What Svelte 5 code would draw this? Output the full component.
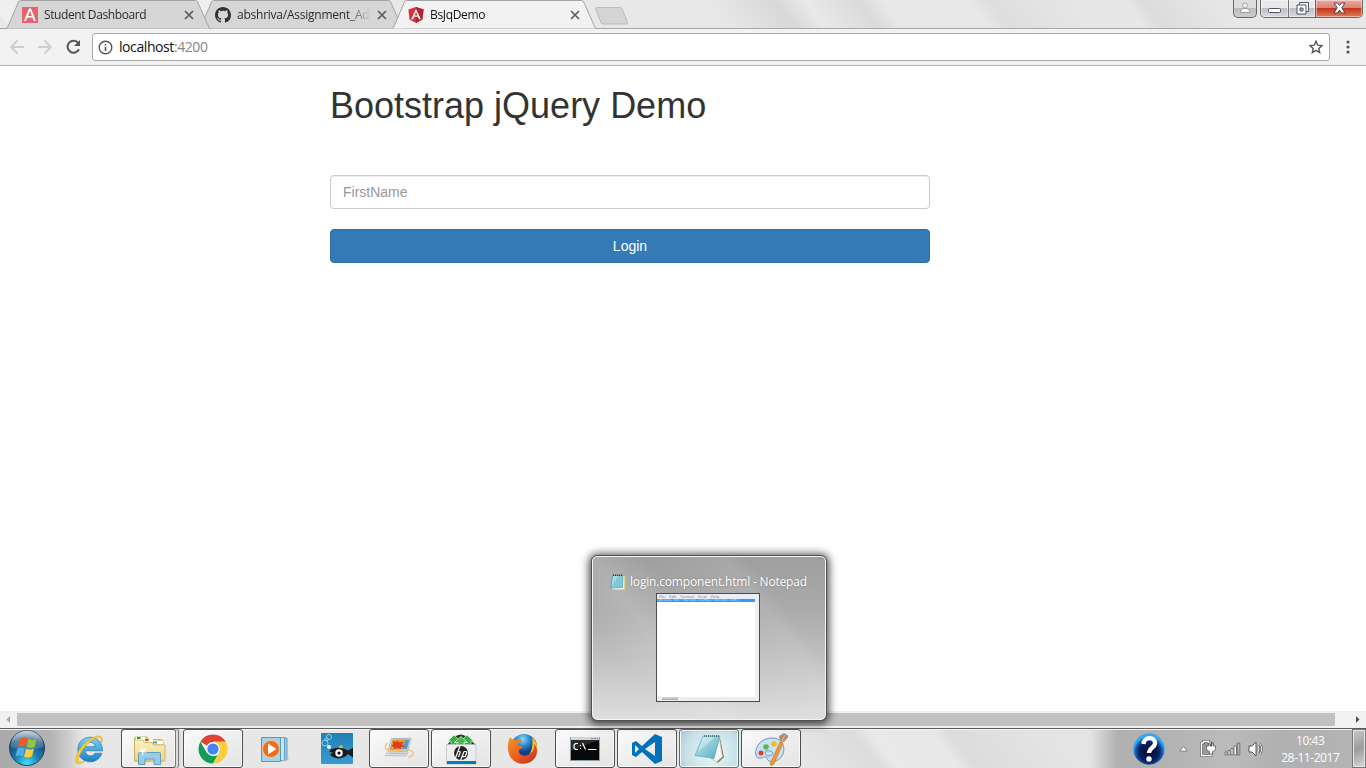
<script>
  const tabs = [
    { title: 'Student Dashboard', icon: 'angular-old', spacing: '-0.4px' },
    { title: 'abshriva/Assignment_Adv', icon: 'github', spacing: '-0.24px' },
    { title: 'BsJqDemo', icon: 'angular', spacing: '-0.35px', active: true }
  ];
  const apps = [
    { icon: 'ie' },
    { icon: 'explorer', open: true, stacked: true },
    { icon: 'chrome', open: true },
    { icon: 'media' },
    { icon: 'fish' },
    { icon: 'pictures', open: true },
    { icon: 'hp', open: true },
    { icon: 'firefox' },
    { icon: 'cmd', open: true },
    { icon: 'code', open: true },
    { icon: 'notepad', open: true, hot: true },
    { icon: 'paint', open: true }
  ];
</script>

{#snippet favicon(name)}
  {#if name === 'github'}
    <svg width="16" height="16" viewBox="0 0 16 16"><path fill="#333" d="M8 0C3.58 0 0 3.58 0 8c0 3.54 2.29 6.53 5.47 7.59.4.07.55-.17.55-.38 0-.19-.01-.82-.01-1.49-2.01.37-2.53-.49-2.69-.94-.09-.23-.48-.94-.82-1.13-.28-.15-.68-.52-.01-.53.63-.01 1.08.58 1.23.82.72 1.21 1.87.87 2.33.66.07-.52.28-.87.51-1.07-1.78-.2-3.64-.89-3.64-3.95 0-.87.31-1.59.82-2.15-.08-.2-.36-1.02.08-2.12 0 0 .67-.21 2.2.82A7.4 7.4 0 0 1 8 3.86c.68 0 1.36.09 2 .27 1.53-1.04 2.2-.82 2.2-.82.44 1.1.16 1.92.08 2.12.51.56.82 1.27.82 2.15 0 3.07-1.87 3.75-3.65 3.95.29.25.54.73.54 1.48 0 1.07-.01 1.93-.01 2.2 0 .21.15.46.55.38A8.01 8.01 0 0 0 16 8c0-4.42-3.58-8-8-8z"/></svg>
  {:else if name === 'angular'}
    <svg width="16" height="16" viewBox="0 0 16 16"><path fill="#dd2e36" d="M8 0 15.6 2.6 14.4 12.6 8 16 1.6 12.6.4 2.6z"/><path fill="#b5222b" d="M8 0 15.6 2.6 14.4 12.6 8 16z"/><path fill="#fff" d="M8 1.8 3.2 12.2h1.9l1-2.4h3.8l1 2.4h1.9zM8 5l1.4 3.4H6.6z"/></svg>
  {:else}
    <svg width="16" height="16" viewBox="0 0 16 16"><path fill="#e8636b" d="M0 0h16v16H0z"/><path fill="#fff" d="M7 1.4h2l5 12.7h-2.2l-1.4-3.6H5.4L4 14.1H1.9zM8 3.8 6.1 8.9h3.8z"/></svg>
  {/if}
{/snippet}

{#snippet appIcon(name)}
  <svg width="34" height="34" viewBox="0 0 34 34">
    {#if name === 'ie'}
      <defs><linearGradient id="ieBlue" x1="0" y1="0" x2="0" y2="1"><stop offset="0" stop-color="#74d5fa"/><stop offset="1" stop-color="#1d7fc4"/></linearGradient></defs>
      <path fill="url(#ieBlue)" stroke="#2a78ad" stroke-width=".7" d="M30.5 18.8H13.2c.3 3.1 2.4 5 5.2 5 2.1 0 3.6-.9 4.5-2.6h7c-1.6 5.2-6.1 8.6-11.7 8.6-7.1 0-12.4-5.2-12.4-12.2C5.8 10.500 11 5.200 18 5.200c7.400 0 12.500 5.400 12.500 13.600zM13.300 14.700h9.900c-.4-2.800-2.300-4.400-4.900-4.400-2.700 0-4.500 1.700-5 4.400z"/>
      <path fill="#fcc92b" stroke="#dfa21a" stroke-width=".5" d="M29.800 10.500c1-3 .6-5.600-1.400-6.300C24.200 2.700 14 8.300 8.300 16.500 3.700 23 2 29.500 4.600 31.300c1.800 1.200 5.200.2 8.700-2.300-3.200 1.400-5.700 1.700-6.600.5-1.500-2 .8-7.700 5.100-13.300C17 9.600 24.300 4.800 27.500 5.600c1.600.4 2.200 2.200 1.300 4.900z"/>
    {:else if name === 'explorer'}
      <defs><linearGradient id="folder" x2="0" y2="1"><stop stop-color="#fbf2c3"/><stop offset="1" stop-color="#ecd584"/></linearGradient></defs>
      <path fill="#efd98a" stroke="#b99d46" stroke-width=".7" d="M2.500 29V6.500q0-1.500 1.500-1.500h11l2 2.500h12q2 0 2 1.500v20z"/>
      <path fill="#fff" d="M4 5h9v3H4zM12 7h9v3h-9zM21 9h10v3H21z"/>
      <path fill="#1fa12a" d="M5 5h3.500v2H5z"/><path fill="#e6412a" d="M13 7h3.500v2H13z"/><path fill="#3699e8" d="M21 9.500h4v2h-4z"/>
      <path fill="url(#folder)" stroke="#c4a850" stroke-width=".7" d="M2.500 29V8h8l2 2.500h7l2 2.500h11.500v16z"/>
      <path fill="#94cce9" stroke="#4c91bc" stroke-width=".8" d="M6.500 32.500V21.500q0-1 1-1h20q1 0 1 1v11h-6.500v-5.500h-9v5.500z"/>
      <path fill="#fff" d="m10.500 13 .8 4.700 4.200-2.500-3 4 3 1.200-4 .2-1 4-.8-4-4-.8 3.400-1-2-3 3 1.500z" opacity=".85"/>
    {:else if name === 'chrome'}
      <path fill="#db4437" d="M17 17 4.400 9.700A14.600 14.600 0 0 1 29.700 9.700H17z"/>
      <path fill="#0f9d58" d="M17 31.600A14.600 14.600 0 0 1 4.400 9.700L10.700 20.700 17 24.300l4.500-1z"/>
      <path fill="#ffcd40" d="M17 9.700h12.700A14.600 14.600 0 0 1 17 31.600l6.300-10.900z"/>
      <circle cx="17" cy="17" r="6.900" fill="#f4f4f4"/><circle cx="17" cy="17" r="5.600" fill="#4285f4"/>
    {:else if name === 'media'}
      <path fill="#9cc6df" stroke="#649fc2" d="M9 6h20v22H9z"/><path fill="#cce3ef" stroke="#649fc2" d="M6.500 5.500h20v23h-20z"/><path fill="#a3d3ee" stroke="#529bc4" d="M3.500 5.500h19v24h-19z"/>
      <circle cx="13" cy="17" r="8.500" fill="#ee6d16" stroke="#ffbd82"/><path fill="#fff" d="m10 11.500 8.500 5.500L10 22.500z"/><path stroke="#bbb" d="m24 29 7-3"/>
    {:else if name === 'fish'}
      <defs><linearGradient id="water" x2="0" y2="1"><stop stop-color="#227fb6"/><stop offset="1" stop-color="#369dd1"/></linearGradient></defs>
      <rect x="1" y="1" width="32" height="31" rx="1" fill="url(#water)"/>
      <path fill="#ebbd43" d="m18 15 4-2 1 4z"/><path fill="#1c1c1e" d="M10 18c4-3 12-3.500 18 .5l5-3v10l-5-3.500c-5 6-14 5.500-18 .5l3-2-3.500-.5z"/>
      <circle cx="19" cy="21" r="3.700" fill="#fff"/><circle cx="19" cy="21" r="1.600"/><circle cx="9" cy="15" r="2" fill="#fff"/>
      <g fill="none" stroke="#b7e2f5" stroke-width=".7"><circle cx="5" cy="11" r="3"/><circle cx="9" cy="5" r="2.500"/><circle cx="6.500" cy="7.500" r="1.600"/></g>
    {:else if name === 'pictures'}
      <path fill="#d2dade" stroke="#9aa5aa" stroke-width=".7" d="m9.500 6.500 19.500-.3-3.500 13L6 19z"/><path fill="#4f9dcf" d="m10.700 7.700 16.800-.2-2.700 10.500-16.800-.2z"/>
      <path fill="#f09a2c" d="m10.700 7.700 13-.1-4 10.300H8z"/><path fill="#e03a1f" d="m11 9 3 1 2-1.500 1 2 5-1-2 3 3 2-4 .5 0 2-4-1-3 1 0-2-3-1 2-1.500z"/>
      <path fill="#e2e7ea" stroke="#a5afb4" stroke-width=".7" d="m6 19.500 20 .5-1.500 4-21-.5z"/><path fill="#b5c1c7" d="m7 20.500 17 .5-.5 1.500-17.500-.5z"/>
      <path fill="none" stroke="#f7c469" stroke-width="1.400" d="M5.500 11c-4 4-2 8.500 5 8 8-1 15-3 19 0 4 2.500 1 5-3 6.500"/>
    {:else if name === 'hp'}
      <path fill="#263a2a" d="m3 13 7-8q7-5 13 0l9 8z"/>
      <path fill="#37ad43" stroke="#d5f7d8" stroke-width=".7" d="m10 3 6 6h-3v4H7V9H4zM23 3l6.500 6H27v4h-7V9h-3z"/>
      <path fill="#42ba4c" stroke="#e1ffe2" stroke-width=".8" d="m17 4.500 6.500 6H20V14h-6v-3.500h-3.500z"/>
      <path fill="#ebeef0" stroke="#b9bcbf" stroke-width=".7" d="M2.500 12.500H32V32H2.500z"/><path fill="#007dba" d="M3 29h29v3H3z"/><circle cx="17" cy="21" r="7" fill="#222"/>
      <path fill="none" stroke="#fff" stroke-width="1.200" d="m16 14-4.500 12m2.300-6.500h1.700q1 0 .6 1.200L14.500 25m5.500-5.500L16.500 28.500m3.500-9h2q1 0 .6 1.200l-1 3q-.4 1-1.600 1h-1.300"/>
    {:else if name === 'firefox'}
      <defs><radialGradient id="globe" cx=".45" cy=".2"><stop stop-color="#8fdcfa"/><stop offset=".55" stop-color="#2587cd"/><stop offset="1" stop-color="#143e86"/></radialGradient><linearGradient id="fox" x2="1" y2="1"><stop stop-color="#f59b25"/><stop offset=".5" stop-color="#e96020"/><stop offset="1" stop-color="#c42c1d"/></linearGradient></defs>
      <circle cx="18" cy="15" r="13" fill="url(#globe)"/><path fill="#f8bd27" d="M26 5c7 6 7 17 0 23-4 2-8 2-12 1 10-3 14-12 12-24z"/>
      <path fill="url(#fox)" d="M4 5q1 2 4 3c4-1 6-1 8 1-3 1-4 2-4 4l5 2-4 3c-1 5 5 7 9 5 5-2 7-7 6-11 3 3 4 7 2 12C26 33 12 35 5 26 1 20 1 12 4 5z"/>
    {:else if name === 'cmd'}
      <path fill="#090909" stroke="#8e9ca5" d="M2.500 5.500h29v23h-29z"/><path fill="#cdd6db" d="M3 5h28v3H3z"/><path fill="#292929" d="M3 8h28L3 19z"/><path stroke="#6885a3" stroke-dasharray="2 1" d="M23 6.500h7"/>
      <path fill="none" stroke="#fff" stroke-width="1.200" d="M10 11.500H7.500L6 13v3l1.500 1.500H10M12.500 13v1m0 2v1m2-6 3 6.500M20 17.500h8.500"/>
    {:else if name === 'code'}
      <path fill="#0072bb" fill-rule="evenodd" d="m25 2 7 3v24l-7 3-13-12-6 5-4-2V11l4-2 6 5zM5 13v8l4-4zM15 17l10-7v14z"/>
    {:else if name === 'notepad'}
      <defs><linearGradient id="padBlue" x2="1" y2="1"><stop stop-color="#d1edf2"/><stop offset="1" stop-color="#4caabe"/></linearGradient></defs>
      <path fill="#8d7a54" d="m28 6 4 19-6 6-3-4z"/><path fill="#f6f6f2" stroke="#b6b4a9" stroke-width=".7" d="m27 4.500 3.500 20-6 5.500-5-3z"/><path fill="url(#padBlue)" stroke="#5fa7b5" stroke-width=".7" d="M11 4h17l-6 22.500-19-3z"/><path stroke="#3c6872" stroke-width="1.600" stroke-dasharray="1 1" d="M12 4h16"/><path fill="#fff" opacity=".3" d="M11 5h12L5 21z"/>
    {:else if name === 'paint'}
      <path fill="#c8e2f3" stroke="#6897bc" d="M12 7C2 10-1 23 4 26c5 1 7-3 9 0 0 5 11 5 15-2 5-8 0-22-16-17zm4 12c-6-2-6 4-2 5 6 0 6-4 2-5z"/>
      <circle cx="7" cy="21" r="2.500" fill="#dd3c31"/><circle cx="12" cy="15" r="2.800" fill="#57b952"/><circle cx="20" cy="12" r="2.800" fill="#f0bc23"/>
      <path fill="#ec9939" stroke="#c96d21" stroke-width=".6" d="m26 10 3 1-9 21q-3 3-4 0z"/><path fill="#b48a68" d="m26 9-1-5 5-3 5 3-5 6z"/><path stroke="#ddc1a4" d="m28 9 3-6"/>
    {/if}
  </svg>
{/snippet}

<div class="screen">
  <header class="strip">
    <div class="tabs">
      {#each tabs as tab, i}
        <div class="tab" class:active={tab.active} style:z-index={tab.active ? 5 : 3 - i}>
          <svg class="shape" width="206" height="29" viewBox="0 0 206 29">
            <path d="M0 28.500q1 0 1.500-1L12.500 2q.7-1.500 2-1.500h175q1.500 0 2.200 1.500l11.300 25.500q.5 1 2 1"/>
          </svg>
          <span class="fav">{@render favicon(tab.icon)}</span>
          <span class="title" style:letter-spacing={tab.spacing}>{tab.title}</span>
          <svg class="x" width="10" height="10" viewBox="0 0 10 10"><path d="m1 1 8 8m0-8L1 9"/></svg>
        </div>
      {/each}
    </div>
    <svg class="newtab" width="36" height="20" viewBox="0 0 36 20"><path d="M3.500 1.500H26q1.500 0 2.200 1.500l5.300 13.500q.5 1.500-1 1.500H9q-1.500 0-2-1.500L1.700 3q-.3-1.500 1.800-1.500z" fill="#d4d4d4" stroke="#bbb"/></svg>
    <div class="window-buttons">
      <span class="user"><svg width="12" height="12" viewBox="0 0 12 12"><circle cx="6" cy="3.500" r="2.500"/><path d="M1.500 10.500V9q0-2 3-2.500h3q3 .5 3 2.500v1.500z"/></svg></span>
      <span class="group">
        <i class="min"><svg width="13" height="6" viewBox="0 0 13 6"><rect x=".5" y=".5" width="12" height="4" rx="1" fill="#fff" stroke="#50536a"/></svg></i>
        <i class="max"><svg width="13" height="13" viewBox="0 0 13 13"><path d="M3.500.5h9v9h-9z" fill="#fff" stroke="#50536a"/><path d="M1 3h9v9H1z" fill="#fff" stroke="#50536a"/><path d="M4 6h3v3H4z" fill="#bbb" stroke="#50536a"/></svg></i>
        <i class="close"><svg width="13" height="12" viewBox="0 0 13 12"><path d="M1 1h3.500l2 2.500L8.500 1H12L8.800 5.700 12 11H8.500l-2-3-2 3H1l3.200-5.300z" fill="#fff" stroke="#52434f"/></svg></i>
      </span>
    </div>
  </header>

  <div class="toolbar">
    <svg class="nav" width="86" height="18" viewBox="0 0 86 18" fill="none">
      <path d="M18 9H5m6.500-6.500L5 9l6.500 6.500M32 9h13m-6.500-6.500L45 9l-6.500 6.500" stroke="#cecece" stroke-width="1.800"/>
      <path d="M72.300 5A6 6 0 1 0 73 11.300" stroke="#555" stroke-width="2"/><path d="M74 2v6h-6z" fill="#555"/>
    </svg>
    <div class="omnibox">
      <svg width="15" height="15" viewBox="0 0 15 15"><circle cx="7.500" cy="7.500" r="6.300" fill="none" stroke="#555" stroke-width="1.400"/><path d="M6.700 6.700h1.600V11H6.700zM6.700 4h1.600v1.600H6.700z" fill="#555"/></svg>
      <span class="url">localhost<b>:4200</b></span>
      <svg class="star" width="14" height="14" viewBox="0 0 14 14"><path d="m7 1.300 1.700 3.900 4.300.4-3.200 2.800.9 4.200L7 10.400l-3.700 2.200.9-4.200L1 5.600l4.300-.4z" fill="none" stroke="#555" stroke-width="1.400"/></svg>
    </div>
    <svg class="dots" width="4" height="14" viewBox="0 0 4 14" fill="#555"><circle cx="2" cy="2" r="1.600"/><circle cx="2" cy="7" r="1.600"/><circle cx="2" cy="12" r="1.600"/></svg>
  </div>

  <main>
    <h1>Bootstrap jQuery Demo</h1>
    <input placeholder="FirstName" />
    <button>Login</button>
  </main>

  <div class="scrollbar">
    <svg width="17" height="17" viewBox="0 0 17 17"><path d="M10 5v7L6.500 8.500z" fill="#a3a3a3"/></svg>
    <div class="thumb"></div>
    <svg class="end" width="17" height="17" viewBox="0 0 17 17"><path d="M7 5v7l3.500-3.500z" fill="#505050"/></svg>
  </div>

  <footer class="taskbar">
    <svg class="orb" width="38" height="38" viewBox="0 0 38 38">
      <defs>
        <radialGradient id="orbFill" cx=".5" cy=".95" r=".9"><stop stop-color="#45e0fb"/><stop offset=".4" stop-color="#1780b4"/><stop offset=".8" stop-color="#174a75"/><stop offset="1" stop-color="#6c8da5"/></radialGradient>
        <linearGradient id="orbShine" x2="0" y2="1"><stop stop-color="#fff" stop-opacity=".6"/><stop offset="1" stop-color="#fff" stop-opacity=".1"/></linearGradient>
      </defs>
      <circle cx="19" cy="19" r="17.500" fill="url(#orbFill)" stroke="#1c425f"/>
      <path d="M2.500 18a16.500 16.500 0 0 1 33 0Q19 23 2.500 18z" fill="url(#orbShine)"/>
      <path fill="#ee5a24" d="M12 10q4-3 7.500-.5L17.500 18q-3.500-2-7.500 0z"/><path fill="#93c83d" d="M20.500 10q4 2 8 0l-2 8q-4 2-8 0z"/><path fill="#50afe6" d="M9.500 19.500q4-2 7.500 0L15 27.500q-3.500-2-7.500 0z"/><path fill="#ffcd3c" d="M18 19.500q4 2 8 0l-2 8q-4 2-8 0z"/>
    </svg>
    <div class="apps">
      {#each apps as app}
        <div class="slot">
          <div class="app" class:open={app.open} class:hot={app.hot} class:stacked={app.stacked}>{@render appIcon(app.icon)}</div>
        </div>
      {/each}
    </div>
    <div class="tray">
      <svg class="help" width="32" height="32" viewBox="0 0 32 32"><defs><radialGradient id="helpBlue" cy=".6"><stop stop-color="#03062f"/><stop offset=".65" stop-color="#092260"/><stop offset=".88" stop-color="#1766c0"/><stop offset="1" stop-color="#36a7ee"/></radialGradient></defs><circle cx="16" cy="16" r="15.700" fill="url(#helpBlue)"/><path d="M10.500 11c.5-8 12-7.500 11.500-.5-.3 4-6 4.500-6 9.500" fill="none" stroke="#fff" stroke-width="4.300"/><circle cx="16" cy="26" r="2.700" fill="#fff"/></svg>
      <svg class="up" width="9" height="6" viewBox="0 0 9 6"><path d="M4.500.7 8.300 5H.7z" fill="#fff" stroke="#666" stroke-width=".7"/></svg>
      <svg class="power" width="16" height="17" viewBox="0 0 16 17"><path d="M3.500 1.500h5V3H11v12.500H1.500V3h2z" fill="#999" stroke="#555" stroke-width="2.600"/><path d="M3.500 2.500V1.500h5v1.500h2.500M3.500 3h-2v12.500h9.500v-3" fill="none" stroke="#fff" stroke-width="1.400"/><path d="M8.500 3v3H6.500v2.500q0 2.500 3 3V14h3v-2.500q3-.5 3-3V6h-2V3h-1.500v3H10V3z" fill="#fff" stroke="#555" stroke-width=".8"/></svg>
      <svg class="signal" width="17" height="14" viewBox="0 0 17 14"><g fill="#fff" stroke="#5e5e5e" stroke-width=".8"><path d="M1 10h2v3H1zM4 8.500h2V13H4zM7 6.500h2V13H7zM10 4h2.500v9H10z"/><path fill="#bbb" d="M13.300 1h2.500v12h-2.500z"/></g></svg>
      <svg class="sound" width="16" height="16" viewBox="0 0 16 16"><path d="M1 5h3l4-4v14l-4-4H1z" fill="#fff" stroke="#555"/><path d="M10 5q2 3 0 6m2-8q3.500 5 0 10" fill="none" stroke="#555" stroke-width="2.200"/><path d="M10 5q2 3 0 6m2-8q3.500 5 0 10" fill="none" stroke="#fff" stroke-width="1"/></svg>
      <div class="clock"><span>10:43</span><span>28-11-2017</span></div>
      <div class="peek"></div>
    </div>
  </footer>

  <div class="preview">
    <div class="caption">
      <svg width="16" height="16" viewBox="0 0 16 16"><path fill="#ead28a" d="M4 2h11v14H3z"/><path fill="#f7f7ef" d="M3 2h11v13H2z"/><path fill="#83c8d8" stroke="#4b9db1" stroke-width=".7" d="M2.500 1.500H13l-.5 12-12 .5z"/><path stroke="#26424b" stroke-width="1.500" stroke-dasharray="1 1" d="M3 1.200h10"/><path fill="#fff" opacity=".35" d="M3 2h5L2 12z"/></svg>
      <span>login.component.html - Notepad</span>
    </div>
    <div class="mini">
      <div class="menu"><span>File</span><span>Edit</span><span>Format</span><span>View</span><span>Help</span></div>
      <div class="page">
        <div class="selection">&lt;div class="row"&gt; &lt;div class="col-md-6"&gt;&lt;div class="form"&gt;</div>
      </div>
      <div class="mini-scroll"><i></i></div>
    </div>
  </div>
</div>

<style>
  :global(body) { margin: 0; overflow: hidden; }
  .screen { position: relative; width: 1366px; height: 768px; display: flex; flex-direction: column; overflow: hidden; background: #fff; font-family: 'Open Sans', 'Noto Sans', sans-serif; }
  svg { display: block; flex: none; }

  .strip { position: relative; z-index: 0; height: 28px; flex: none; display: flex; padding-left: 6px; background: #e8e8e8; border-bottom: 1px solid #a8a8a8; clip-path: inset(0 0 -1px 0); }
  .strip::before { content: ''; position: absolute; z-index: -1; inset: 0 -10px 0 0; transform: skewX(36deg); background: linear-gradient(90deg, #f0f0f0 0, #e4e4e4 170px, #f0f0f0 200px, #e8e8e8 350px, #e8e8e8 715px, #d8d8d8 785px, #e9e9e9 815px, #dadada 868px, #e8e8e8 892px, #e8e8e8 978px, #dedede 1000px, #e6e6e6 1080px, #e7e7e7 1135px, #dcdcdc 1152px, #e7e7e7 1230px); }
  .tabs { display: flex; }
  .tab { position: relative; isolation: isolate; display: flex; align-items: center; width: 206px; height: 29px; margin-right: -13px; box-sizing: border-box; padding: 0 17px 0 16px; font-size: 12px; color: #2b2b2b; }
  .shape { position: absolute; left: 0; top: 0; z-index: -1; fill: #d6d6d6; stroke: #a3a3a3; }
  .active .shape { fill: #f2f2f2; }
  .active { color: #111; }
  .title { width: 140px; margin-left: 6px; white-space: nowrap; line-height: 20px; -webkit-mask-image: linear-gradient(90deg, #000 110px, transparent 134px); mask-image: linear-gradient(90deg, #000 110px, transparent 134px); }
  .x { fill: none; stroke: #5c5c5c; stroke-width: 1.700; }
  .newtab { margin: 6px 0 0 9px; }
  .window-buttons { margin-left: auto; display: flex; gap: 3px; padding-right: 3px; height: 18px; }
  .user, .group { box-sizing: border-box; height: 18px; display: flex; border: 1px solid #686868; border-top: 0; border-radius: 0 0 5px 5px; overflow: hidden; }
  .user { width: 24px; justify-content: center; padding-top: 2px; background: linear-gradient(#ddd 45%, #bdbdbd 50%, #ccc); }
  .user svg { fill: #f7f7f7; stroke: #8d8d8d; stroke-width: .8; }
  .group { width: 103px; background: linear-gradient(#e9e9ea 45%, #bec0c4 50%, #d8dadd); }
  .group i { display: flex; justify-content: center; box-shadow: inset 0 0 0 1px #ffffff70; }
  .min { width: 28px; border-right: 1px solid #777; padding-top: 8px; box-sizing: border-box; }
  .max { width: 27px; padding-top: 2px; box-sizing: border-box; border-right: 1px solid #7c5656; }
  .close { flex: 1; padding-top: 2px; background: linear-gradient(#e9aa9e 0, #d98375 45%, #c3351c 50%, #dc7d56); }

  .toolbar { height: 37px; box-sizing: border-box; flex: none; display: flex; align-items: center; background: #f2f2f2; border-bottom: 1px solid #b4b4b4; }
  .nav { margin-left: 6px; }
  .omnibox { width: 1238px; height: 28px; box-sizing: border-box; display: flex; align-items: center; border: 1px solid #a9a9a9; border-radius: 3px; background: #fff; padding: 0 6px 0 5px; }
  .url { margin-left: 6px; font-size: 14px; letter-spacing: -.42px; color: #111; line-height: 20px; }
  .url b { font-weight: 400; color: #858585; }
  .star { margin-left: auto; }
  .dots { margin-left: 16px; }

  main { flex: 1; width: 600px; margin-left: 330px; font-family: 'Liberation Sans', Arial, sans-serif; color: #333; display: flex; flex-direction: column; }
  h1 { margin: 20px 0 0; font-size: 36px; line-height: 40px; font-weight: 400; white-space: nowrap; }
  input { margin: 49px 0 0; height: 34px; box-sizing: border-box; border: 1px solid #ccc; border-radius: 4px; padding: 6px 12px; font: 14px 'Liberation Sans', Arial, sans-serif; box-shadow: inset 0 1px 1px rgba(0,0,0,.075); outline: none; }
  input::placeholder { color: #999; opacity: 1; }
  button { margin-top: 20px; height: 34px; padding: 0; border: 1px solid #2e6da4; border-radius: 4px; background: #337ab7; color: #fff; font: 14px/20px 'Liberation Sans', Arial, sans-serif; }

  .scrollbar { height: 17px; flex: none; display: flex; align-items: center; background: #f1f1f1; }
  .thumb { width: 1318px; height: 13px; background: #c1c1c1; }
  .end { margin-left: auto; }

  .taskbar { position: relative; z-index: 0; height: 40px; box-sizing: border-box; flex: none; display: flex; border-top: 1px solid #5a5a5a; background: #e8e8e8; overflow: hidden; box-shadow: inset 0 1px #f6f6f6; }
  .taskbar::before { content: ''; position: absolute; z-index: -2; inset: 1px -20px 0 -20px; transform: skewX(37deg); background: linear-gradient(90deg, #e7e7e7 0, #e7e7e7 810px, #dcdcdc 885px, #e9e9e9 903px, #e8e8e8 965px, #dcdcdc 982px, #e4e4e4 1080px, #e4e4e4); }
  .taskbar::after { content: ''; position: absolute; z-index: -1; inset: 1px 0 0; background: linear-gradient(90deg, #a9a9a9 0, #b3b3b3 50px, #c6c6c6 64px, #e6e6e600 84px, #e6e6e600 1090px, #b0b0b0 1118px, #b3b3b3 1170px, #bbb 1230px, #b0b0b0 1280px, #b5b5b5); }
  .orb { margin: 0 0 0 8px; }
  .apps { display: flex; margin-left: 13px; }
  .slot { width: 62px; height: 39px; }
  .app { width: 60px; height: 39px; box-sizing: border-box; display: flex; align-items: center; justify-content: center; border: 1px solid transparent; border-radius: 3px; }
  .open { border-color: #4f4f4f; background: linear-gradient(150deg, #fbfbfb, #ededed 55%, #e4e4e4); box-shadow: inset 0 0 0 1px #fafafa; }
  .stacked { width: 55px; box-shadow: inset 0 0 0 1px #fafafa, 2px 0 #ddd, 3px 0 #777, 5px 0 #ddd; border-right-color: #777; }
  .hot { background: radial-gradient(circle at 55% 60%, #eafafb, #c4dfe5 70%, #a4c7d1); border-color: #527178; }
  .tray { display: flex; align-items: center; margin-left: auto; height: 39px; width: 233px; }
  .up { margin-left: 14px; }
  .power { margin-left: 12px; }
  .signal { margin-left: 8px; }
  .sound { margin-left: 7px; }
  .clock { width: 86px; margin-left: 5px; display: flex; flex-direction: column; align-items: center; font-size: 12px; line-height: 17px; letter-spacing: -.45px; color: #fff; }
  .peek { margin-left: auto; width: 15px; height: 39px; box-sizing: border-box; border: 1px solid #777; box-shadow: inset 0 0 0 1px #e5e5e5; background: linear-gradient(160deg, #c8c8c8, #9c9c9c 50%, #d6d6d6); }

  .preview { position: absolute; z-index: 4; left: 592px; top: 556px; width: 234px; height: 164px; box-sizing: border-box; border: 1px solid #f4f4f4; outline: 1px solid #505050; border-radius: 5px; background: linear-gradient(52deg, #d3d3d300 20%, #ececec30 35%, #d3d3d300 50%, #ffffff16 72%, transparent 78%), linear-gradient(#9e9e9e, #acacac 35%, #c8c8c8 72%, #dedede); box-shadow: 0 1px 9px 3px #000000b5; }
  .caption { box-sizing: border-box; display: flex; align-items: center; padding: 16px 0 0 17px; height: 33px; gap: 4px; font-size: 12px; color: #fff; white-space: nowrap; letter-spacing: -.18px; text-shadow: 0 0 2px #777; }
  .mini { margin: 3px 0 0 63px; width: 104px; height: 109px; box-sizing: border-box; border: 1px solid #4c4c4c; background: #fff; display: flex; flex-direction: column; overflow: hidden; }
  .menu { display: flex; gap: 4px; height: 5px; font-size: 4px; line-height: 5px; padding-left: 2px; color: #777; background: #e9edf7; }
  .page { flex: 1; border-right: 4px solid #f0f0f0; }
  .selection { height: 3px; background: #3399ff; color: #d2eaff; font-size: 3px; line-height: 3px; white-space: nowrap; }
  .mini-scroll { height: 4px; background: #eee; padding-left: 5px; }
  .mini-scroll i { display: block; width: 16px; height: 3px; background: #ccc; border-bottom: 1px solid #aaa; box-sizing: border-box; }
</style>
